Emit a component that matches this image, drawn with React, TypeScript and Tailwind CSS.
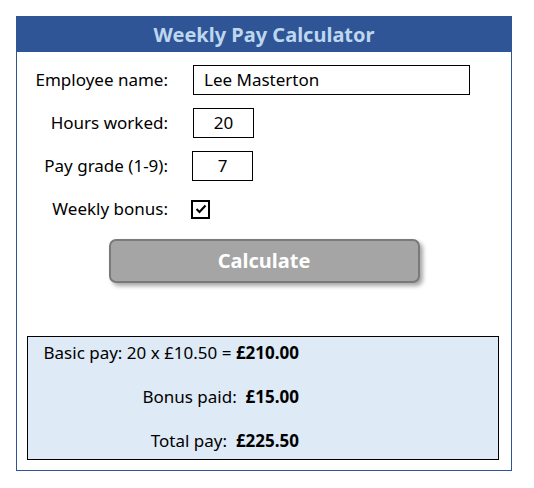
export default function App() {
  return (
    <div className="min-h-screen bg-white pl-4 pt-4" style={{ fontFamily: '"Noto Sans", sans-serif' }}>
      <div className="w-[496px] h-[455px] border border-[#2f5597] flex flex-col">
        <div className="h-[35px] bg-[#2f5597] flex items-center justify-center">
          <h1 className="text-[20px] font-bold text-[#bdd7ee]">Weekly Pay Calculator</h1>
        </div>

        <div className="flex flex-col gap-[13px] pt-[13px] text-[17px] text-black">
          <div className="flex items-center h-[30px]">
            <label className="w-[151px] text-right">Employee name:</label>
            <div className="ml-[25px] w-[277px] h-[30px] border border-black flex items-center px-[10px]">
              Lee Masterton
            </div>
          </div>
          <div className="flex items-center h-[30px]">
            <label className="w-[151px] text-right">Hours worked:</label>
            <div className="ml-[25px] w-[61px] h-[30px] border border-black flex items-center justify-center">
              20
            </div>
          </div>
          <div className="flex items-center h-[30px]">
            <label className="w-[151px] text-right">Pay grade (1-9):</label>
            <div className="ml-[24px] w-[61px] h-[30px] border border-black flex items-center justify-center">
              7
            </div>
          </div>
          <div className="flex items-center h-[30px]">
            <label className="w-[151px] text-right">Weekly bonus:</label>
            <div className="ml-[23px] w-[19px] h-[19px] border-2 border-black flex items-center justify-center">
              <svg width="12" height="10" viewBox="0 0 12 10">
                <path d="M1.5 5 L4.5 8 L10.5 1.5" fill="none" stroke="black" strokeWidth="2" />
              </svg>
            </div>
          </div>
        </div>

        <div className="flex justify-center mt-[15px]">
          <button className="w-[311px] h-[44px] rounded-[7px] bg-[#a5a5a5] border-2 border-[#7a7a7a] shadow-[3px_3px_4px_rgba(0,0,0,0.35)] text-white text-[20px] font-bold">
            Calculate
          </button>
        </div>

        <div className="ml-[10px] w-[472px] mt-[53px] h-[124px] border border-black bg-[#deeaf6] flex flex-col text-[17px] text-black">
          <div className="w-[271px] text-right pt-[4px] leading-[24px]">
            Basic pay: 20 x £10.50 = <span className="font-bold">£210.00</span>
          </div>
          <div className="w-[271px] text-right mt-[20px] leading-[24px]">
            Bonus paid:&nbsp; <span className="font-bold">£15.00</span>
          </div>
          <div className="w-[271px] text-right mt-[20px] leading-[24px]">
            Total pay:&nbsp; <span className="font-bold">£225.50</span>
          </div>
        </div>
      </div>
    </div>
  );
}
